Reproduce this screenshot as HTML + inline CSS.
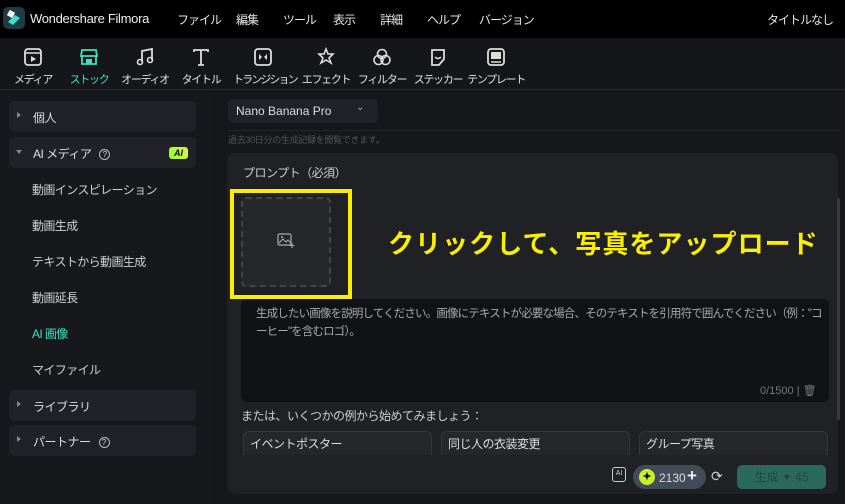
<!DOCTYPE html>
<html><head><meta charset="utf-8"><style>
*{margin:0;padding:0;box-sizing:border-box}
body{width:845px;height:504px;overflow:hidden;background:#16171a;font-family:"Liberation Sans","Noto Sans CJK JP",sans-serif;color:#d8d8d8;position:relative}
.a{position:absolute}
.top{left:0;top:0;width:845px;height:38px;background:#000}
.menu span{position:absolute;top:11px;font-size:12px;color:#e6e6e6;letter-spacing:-1px;white-space:nowrap}
.tb{left:0;top:38px;width:845px;height:52px;background:#151619;border-bottom:1px solid #2a2b2e}
.tool{position:absolute;top:46px;width:60px;text-align:center;font-size:11px;color:#e0e0e0;white-space:nowrap;letter-spacing:-1.3px}
.tool svg{display:block;margin:0 auto 3px;width:22px;height:22px}
.side{left:0;top:91px;width:210px;height:413px;background:#17181c}
.grp{position:absolute;left:9px;width:187px;height:31px;background:#202227;border-radius:6px;font-size:12px;color:#ddd}
.grp .t{position:absolute;left:24px;top:8px;letter-spacing:-0.5px}
.grp .ar{position:absolute;left:8px;top:11px;width:0;height:0;border-left:4px solid #888;border-top:3px solid transparent;border-bottom:3px solid transparent}
.it{position:absolute;left:32px;font-size:12px;color:#d0d0d0;letter-spacing:-0.6px}
.q{display:inline-block;width:11px;height:11px;border:1px solid #bbb;border-radius:50%;font-size:8px;text-align:center;line-height:9px;margin-left:8px;vertical-align:1px;letter-spacing:0}
</style></head><body>
<div class="a top"></div>
<div class="a" style="left:3px;top:7px;width:22px;height:22px;background:#1f3a45;border-radius:5px"><svg width="22" height="22"><path d="M5 15 L12 8 L17 11 L10 18Z" fill="#3fe0c0"/><rect x="5" y="4" width="6" height="6" fill="#fff" transform="rotate(30 8 7)"/></svg></div>
<div class="a" style="left:30px;top:11px;font-size:13px;color:#eee;letter-spacing:-0.3px">Wondershare Filmora</div>
<div class="menu"><span style="left:177px">ファイル</span><span style="left:236px">編集</span><span style="left:283px">ツール</span><span style="left:333px">表示</span><span style="left:380px">詳細</span><span style="left:427px">ヘルプ</span><span style="left:479px">バージョン</span><span style="left:767px">タイトルなし</span></div>
<div class="a tb"></div>
<div class="tool" style="left:3px"><svg viewBox="0 0 22 22"><rect x="3" y="3" width="16" height="16" rx="3" fill="none" stroke="#ddd" stroke-width="1.8"/><line x1="3" y1="7" x2="19" y2="7" stroke="#ddd" stroke-width="1.5"/><path d="M9 10 L14 13 L9 16Z" fill="#ddd"/></svg>メディア</div>
<div class="tool" style="left:59px;color:#3ee0c0"><svg viewBox="0 0 22 22"><path d="M4 4 H18 L19 10 H3Z M4 10 V18 H18 V10" fill="none" stroke="#3ee0c0" stroke-width="1.8"/><rect x="8" y="13" width="6" height="5" fill="#3ee0c0"/></svg>ストック</div>
<div class="tool" style="left:115px"><svg viewBox="0 0 22 22"><path d="M8 16 V5 L18 3 V14" fill="none" stroke="#ddd" stroke-width="1.8"/><circle cx="6" cy="16" r="2.5" fill="none" stroke="#ddd" stroke-width="1.6"/><circle cx="16" cy="14" r="2.5" fill="none" stroke="#ddd" stroke-width="1.6"/></svg>オーディオ</div>
<div class="tool" style="left:171px"><svg viewBox="0 0 22 22"><path d="M4 6 V4 H18 V6 M11 4 V19 M8 19 H14" fill="none" stroke="#ddd" stroke-width="1.8"/></svg>タイトル</div>
<div class="tool" style="left:233px;letter-spacing:-1.9px"><svg viewBox="0 0 22 22"><rect x="3" y="3" width="16" height="16" rx="3" fill="none" stroke="#ddd" stroke-width="1.8"/><path d="M7 8 L10 11 L7 14Z M15 8 L12 11 L15 14Z" fill="#ddd"/></svg>トランジション</div>
<div class="tool" style="left:296px"><svg viewBox="0 0 22 22"><path d="M11 3 L13 8 L18 8 L14 12 L16 17 L11 14 L6 17 L8 12 L4 8 L9 8Z" fill="none" stroke="#ddd" stroke-width="1.6"/></svg>エフェクト</div>
<div class="tool" style="left:352px"><svg viewBox="0 0 22 22"><circle cx="11" cy="8" r="4.5" fill="none" stroke="#ddd" stroke-width="1.6"/><circle cx="7.5" cy="14" r="4.5" fill="none" stroke="#ddd" stroke-width="1.6"/><circle cx="14.5" cy="14" r="4.5" fill="none" stroke="#ddd" stroke-width="1.6"/></svg>フィルター</div>
<div class="tool" style="left:408px"><svg viewBox="0 0 22 22"><path d="M5 4 H17 V13 L12 19 H5Z" fill="none" stroke="#ddd" stroke-width="1.8"/><path d="M8 11 Q11 14 14 11" fill="none" stroke="#ddd" stroke-width="1.5"/></svg>ステッカー</div>
<div class="tool" style="left:466px"><svg viewBox="0 0 22 22"><rect x="3" y="3" width="16" height="16" rx="3" fill="none" stroke="#ddd" stroke-width="1.8"/><rect x="6" y="6" width="10" height="7" fill="#ddd"/><line x1="6" y1="16" x2="16" y2="16" stroke="#ddd" stroke-width="1.5"/></svg>テンプレート</div>

<div class="a side"></div>
<div class="grp" style="top:101px"><div class="ar"></div><div class="t">個人</div></div>
<div class="grp" style="top:137px"><div class="ar" style="border-left:3px solid transparent;border-right:3px solid transparent;border-top:4px solid #888;border-bottom:0;left:7px;top:13px"></div><div class="t">AI メディア<span class="q">?</span></div><div class="a" style="left:160px;top:10px;width:19px;height:12px;border-radius:3px;background:linear-gradient(90deg,#9f3,#d4f542);color:#111;font-size:9px;font-weight:bold;text-align:center;line-height:12px;font-style:italic">AI</div></div>
<div class="it" style="top:181px">動画インスピレーション</div>
<div class="it" style="top:217px">動画生成</div>
<div class="it" style="top:253px">テキストから動画生成</div>
<div class="it" style="top:289px">動画延長</div>
<div class="it" style="top:325px;color:#3ee0c0">AI 画像</div>
<div class="it" style="top:361px">マイファイル</div>
<div class="grp" style="top:390px"><div class="ar"></div><div class="t">ライブラリ</div></div>
<div class="grp" style="top:425px"><div class="ar"></div><div class="t">パートナー<span class="q">?</span></div></div>

<div class="a" style="left:228px;top:99px;width:150px;height:24px;background:#202227;border-radius:5px;font-size:12px;color:#ddd;padding:5px 8px">Nano Banana Pro<span style="position:absolute;left:128px;top:3px;font-size:10px;color:#aaa">⌄</span></div>
<div class="a" style="left:228px;top:130px;width:612px;height:1px;background:#232428"></div>
<div class="a" style="left:228px;top:133px;font-size:9px;color:#555;letter-spacing:-0.3px">過去30日分の生成記録を閲覧できます。</div>
<div class="a" style="left:227px;top:153px;width:611px;height:341px;background:#1f2125;border-radius:8px"></div>
<div class="a" style="left:243px;top:164px;font-size:12px;color:#ccc;letter-spacing:-0.5px">プロンプト（必須）</div>
<div class="a" style="left:241px;top:197px;width:90px;height:90px;border:2px dashed #444;border-radius:5px;background:#262729"></div>
<svg class="a" style="left:277px;top:232px" width="18" height="16"><rect x="1" y="2" width="13" height="11" rx="1.5" fill="none" stroke="#aaa" stroke-width="1.2"/><path d="M2 11 L6 7 L9 10 L11 8 L14 11" fill="none" stroke="#aaa" stroke-width="1.1"/><circle cx="5" cy="5" r="1" fill="#aaa"/><path d="M15 11 V16 M12.5 13.5 H17.5" stroke="#aaa" stroke-width="1.1"/></svg>
<div class="a" style="left:230px;top:189px;width:122px;height:110px;border:4px solid #fbee00"></div>
<div class="a" style="left:388px;top:224px;font-size:26px;font-weight:bold;color:#fbee00;letter-spacing:1.05px;white-space:nowrap">クリックして、写真をアップロード</div>
<div class="a" style="left:241px;top:299px;width:588px;height:103px;background:#111215;border-radius:6px"></div>
<div class="a" style="left:256px;top:305px;width:566px;font-size:11.5px;line-height:18px;color:#a8a8a8;letter-spacing:-0.85px">生成したい画像を説明してください。画像にテキストが必要な場合、そのテキストを引用符で囲んでください（例："コーヒー"を含むロゴ）。</div>
<div class="a" style="left:760px;top:384px;font-size:11px;color:#777">0/1500 | 🗑</div>
<div class="a" style="left:241px;top:407px;font-size:12px;color:#ccc;letter-spacing:-0.5px">または、いくつかの例から始めてみましょう：</div>
<div class="a" style="left:243px;top:431px;width:189px;height:26px;background:#25272b;border:1px solid #35373b;border-bottom:0;border-radius:6px 6px 0 0;font-size:12px;color:#ddd;padding:3px 6px;letter-spacing:-0.5px">イベントポスター</div>
<div class="a" style="left:441px;top:431px;width:189px;height:26px;background:#25272b;border:1px solid #35373b;border-bottom:0;border-radius:6px 6px 0 0;font-size:12px;color:#ddd;padding:3px 6px;letter-spacing:-0.5px">同じ人の衣装変更</div>
<div class="a" style="left:639px;top:431px;width:189px;height:26px;background:#25272b;border:1px solid #35373b;border-bottom:0;border-radius:6px 6px 0 0;font-size:12px;color:#ddd;padding:3px 6px;letter-spacing:-0.5px">グループ写真</div>
<div class="a" style="left:227px;top:455px;width:611px;height:3px;background:#1f2125"></div>
<div class="a" style="left:837px;top:198px;width:3px;height:222px;background:#3a3b3f;border-radius:2px"></div>
<div class="a" style="left:612px;top:467px;width:14px;height:15px;border:1.5px solid #ccc;border-radius:3px;font-size:7px;color:#ccc;text-align:center;line-height:12px">AI</div>
<div class="a" style="left:633px;top:465px;width:73px;height:24px;background:#434a58;border-radius:12px"></div>
<div class="a" style="left:639px;top:469px;width:16px;height:16px;border-radius:50%;background:#c8f02a;color:#111;font-size:11px;text-align:center;line-height:16px;font-weight:bold">✦</div>
<div class="a" style="left:659px;top:471px;font-size:12px;color:#ddd">2130</div>
<div class="a" style="left:687px;top:466px;font-size:17px;color:#eee;font-weight:bold">+</div>
<div class="a" style="left:711px;top:468px;font-size:14px;color:#ccc">⟳</div>
<div class="a" style="left:737px;top:465px;width:89px;height:24px;background:#2b6a5a;border-radius:5px;font-size:12px;color:#1d4a3f;text-align:center;line-height:24px">生成 ✦ 45</div>
</body></html>
